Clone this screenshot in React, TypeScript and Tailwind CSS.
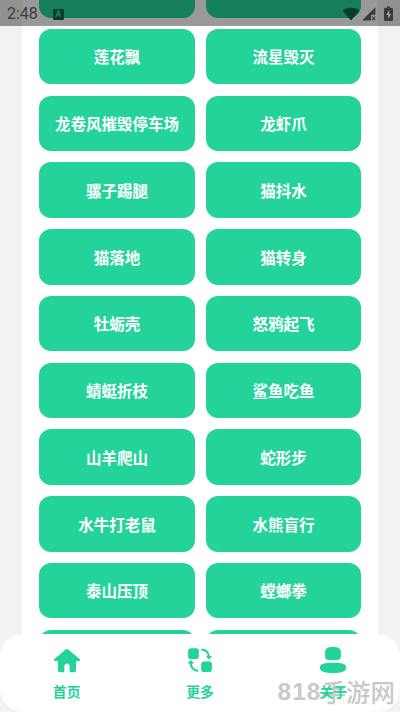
import React from 'react';

interface iTab {
  label: string;
  icon: React.ReactNode;
}

const moves: string[] = [
  '',
  '',
  '莲花飘',
  '流星毁灭',
  '龙卷风摧毁停车场',
  '龙虾爪',
  '骡子踢腿',
  '猫抖水',
  '猫落地',
  '猫转身',
  '牡蛎壳',
  '怒鸦起飞',
  '蜻蜓折枝',
  '鲨鱼吃鱼',
  '山羊爬山',
  '蛇形步',
  '水牛打老鼠',
  '水熊盲行',
  '泰山压顶',
  '螳螂拳',
  '',
  '',
];

const HomeIcon = () => (
  <svg viewBox="0 0 28 28" className="size-7" fill="currentColor">
    <path d="M12.700 3.500a1.900 1.900 0 0 1 2.600 0l11.300 9.600c.9.800.6 1.900-.6 1.900h-3v9.100c0 1.500-.7 2.200-2.100 2.200H18.200c-1.100 0-1.600-.6-1.600-1.600v-4.400c0-1.900-1-2.900-2.600-2.900s-2.600 1-2.600 2.900v4.400c0 1-.5 1.600-1.600 1.600H7.100c-1.400 0-2.100-.7-2.100-2.200V15H2c-1.200 0-1.500-1.100-.6-1.900z" />
  </svg>
);

const SwapIcon = () => (
  <svg viewBox="0 0 28 28" className="size-7" fill="currentColor">
    <rect x="2.1" y="2.2" width="10.7" height="10.8" rx="2.8" />
    <rect x="15.2" y="15.4" width="10.7" height="10.7" rx="2.8" />
    <path d="M15.500 3.500c4.500.5 7.200 3.300 7.500 7.300" fill="none" stroke="currentColor" strokeWidth="2.1" />
    <path d="M20.500 10.400h5l-2.500 2.900z" stroke="currentColor" strokeWidth=".8" strokeLinejoin="round" />
    <path d="M12 24.900c-4.300-.5-7-3.400-7.200-8" fill="none" stroke="currentColor" strokeWidth="2.1" />
    <path d="M2.300 17.200h5l-2.500-2.900z" stroke="currentColor" strokeWidth=".8" strokeLinejoin="round" />
  </svg>
);

const UserIcon = () => (
  <svg viewBox="0 0 28 28" className="size-7" fill="currentColor">
    <path d="M14 1.100c5.800 0 7.900 1.700 7.900 5.600v3.500c0 2.700-1.300 3.700-4 3.700h-7.800c-2.700 0-4-1-4-3.700V6.700c0-3.900 2.100-5.600 7.900-5.600z" />
    <path d="M14 16.800c9 0 13.100 1 13.100 4.700 0 4.200-4.600 5.500-13.100 5.500S.9 25.700.9 21.500c0-3.700 4.100-4.700 13.100-4.700z" />
  </svg>
);

const tabs: iTab[] = [
  { label: '首页', icon: <HomeIcon /> },
  { label: '更多', icon: <SwapIcon /> },
  { label: '关于', icon: <UserIcon /> },
];

const StatusBar = () => (
  <header className="absolute inset-x-0 top-0 flex h-[26px] items-center bg-black/40 px-[7px] pt-[2px] text-[#3a3c3b]">
    <span className="font-[Roboto] text-[16px] leading-none">2:48</span>
    <span className="ml-[15px] flex size-[11px] items-center justify-center rounded-[1.5px] bg-[#083c29] font-[Roboto] text-[9px] font-bold leading-none text-[#15885f]">
      A
    </span>
    <div className="ml-auto flex items-center">
      <svg viewBox="0 0 18 14" className="h-[14px] w-[18px]">
        <path d="M.5 3.500C5-.3 13-.3 17.500 3.500L9 13.500z" fill="#063c29" />
      </svg>
      <svg viewBox="0 0 14 14" className="ml-[2px] h-[14px] w-[14px]">
        <path d="M0 13.500 13.400.2v7.600H9v5.700z" fill="currentColor" />
        <path d="m10 9.600 3.200 3.400m0-3.400L10 13" stroke="currentColor" strokeWidth="1.100" />
      </svg>
      <svg viewBox="0 0 9 16" className="ml-[8px] h-[16px] w-[9px]">
        <path d="M2.800.5h3.400V2H8q1 0 1 1v11q0 1-1 1H1q-1 0-1-1V3q0-1 1-1h1.800z" fill="currentColor" />
        <path d="M5.200 4 2.300 9h2v4l2.700-5H5.200z" fill="#aaa" />
      </svg>
    </div>
  </header>
);

const TabBar = () => (
  <nav className="absolute inset-x-0 bottom-0 h-[78px] rounded-[23px] bg-white text-[#23d39a]">
    <div className="absolute bottom-[6px] right-[5px] flex items-center whitespace-nowrap leading-[28px] text-[#c9c9c9]">
      <span className="font-['Liberation_Sans'] text-[24.500px] font-bold tracking-[1px]">818</span>
      <span className="text-[24.500px] font-medium">手游网</span>
    </div>
    <div className="relative grid grid-cols-3">
      {tabs.map((tab) => (
        <div key={tab.label} className="flex flex-col items-center pt-3">
          {tab.icon}
          <span className="mt-[7px] text-[13.800px] font-bold leading-5">{tab.label}</span>
        </div>
      ))}
    </div>
  </nav>
);

const App = () => {
  return (
    <div className="relative h-[712px] w-full overflow-hidden bg-[#f1f3f1] font-['Noto_Sans_CJK_SC',sans-serif]">
      <main className="mx-[22px] h-full overflow-hidden bg-white">
        <div className="-mt-[38px] grid grid-cols-[155.5px_155.5px] gap-x-[11px] gap-y-[11.25px] pl-[17.200px]">
          {moves.map((name, i) => (
            <button
              key={i}
              className="flex h-[55.5px] items-center justify-center rounded-[12px] bg-[#23d39a] pt-px text-[15.5px] font-bold leading-none text-white"
            >
              {name}
            </button>
          ))}
        </div>
      </main>
      <StatusBar />
      <TabBar />
    </div>
  );
};

export default App;
